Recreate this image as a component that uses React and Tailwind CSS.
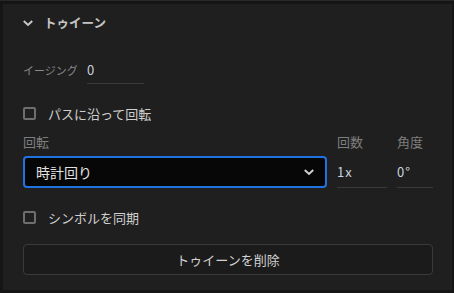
import React from "react";

const font = { fontFamily: '"Noto Sans CJK JP", "Noto Sans", sans-serif' };

const Chevron = ({ className = "" }) => (
  <svg viewBox="0 0 10 6" className={className} fill="none" stroke="currentColor" strokeWidth="2" strokeLinecap="square">
    <path d="M1.5 1.2 L5 4.5 L8.5 1.2" />
  </svg>
);

const Checkbox = ({ label }) => (
  <label className="flex items-center gap-[12px] h-[20px]">
    <span className="w-[13px] h-[13px] border-2 border-[#6e6e6e] rounded-[2px]" />
    <span className="text-[13px] text-[#cfcfcf] leading-none whitespace-nowrap">{label}</span>
  </label>
);

export default function App() {
  return (
    <div className="w-[454px] h-[293px] bg-[#151515] border-t border-[#272727] pt-[3px] pl-[3px] pr-[2px] pb-[3px]" style={font}>
      <div className="h-full bg-[#1f1f1f] pl-[20px] pr-[18px] pt-[8px] flex flex-col">
        {/* header */}
        <div className="flex items-center h-[22px] gap-[11px]">
          <Chevron className="w-[10px] h-[7px] text-[#c8c8c8]" />
          <span className="text-[12.5px] font-bold text-[#c4c4c4] leading-none whitespace-nowrap">トゥイーン</span>
        </div>

        {/* easing */}
        <div className="mt-[23px] flex items-center h-[27px] gap-[11px]">
          <span className="text-[11px] text-[#8a8a8a] leading-none w-[53px] shrink-0 whitespace-nowrap">イージング</span>
          <div className="w-[57px] h-full border-b border-[#3a3a3a] flex items-center text-[13px] text-[#c9d3de]">0</div>
        </div>

        <div className="mt-[19px]">
          <Checkbox label="パスに沿って回転" />
        </div>

        {/* rotation labels */}
        <div className="mt-[8px] flex h-[20px] items-center gap-[10px] text-[13px] text-[#7e7e7e] leading-none">
          <span className="w-[304px]">回転</span>
          <span className="w-[50px]">回数</span>
          <span className="w-[36px]">角度</span>
        </div>

        <div className="mt-[5px] flex h-[32px] gap-[10px]">
          <div className="w-[304px] h-full bg-[#070707] border-2 border-[#1f72e0] rounded-[4px] flex items-center justify-between pl-[11px] pr-[11px]">
            <span className="text-[14px] text-[#e2e2e2] leading-none">時計回り</span>
            <Chevron className="w-[10px] h-[7px] text-[#d0d0d0]" />
          </div>
          <div className="w-[50px] h-full border-b border-[#3a3a3a] flex items-center text-[13px] tracking-[1px] text-[#c9d3de]">1x</div>
          <div className="w-[36px] h-full border-b border-[#3a3a3a] flex items-center text-[13px] tracking-[1px] text-[#c9d3de]">0°</div>
        </div>

        <div className="mt-[19px]">
          <Checkbox label="シンボルを同期" />
        </div>

        <button className="mt-[17px] h-[31px] w-[410px] bg-[#1b1b1b] border border-[#3a3a3a] rounded-[4px] text-[13px] text-[#d2d2d2] flex items-center justify-center">
          トゥイーンを削除
        </button>
      </div>
    </div>
  );
}
